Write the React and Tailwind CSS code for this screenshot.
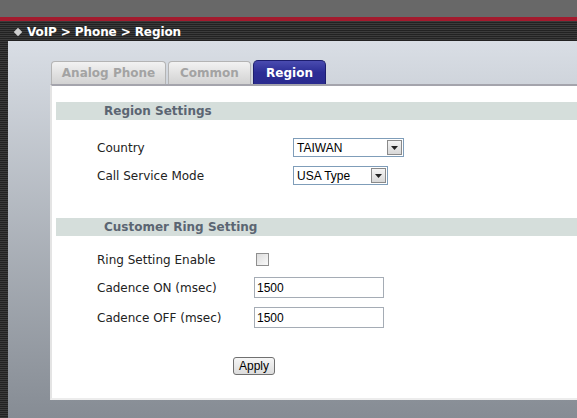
const stripes =
  'bg-[repeating-linear-gradient(180deg,#3b3b3b_0px,#3b3b3b_1px,#222222_1px,#222222_2px)]';

const SectionBar = ({ title }) => (
  <div className="ml-[4px] flex h-[18px] items-center bg-[#d5dedb] pl-[48px] text-[12px] font-bold text-[#5b6572]">
    {title}
  </div>
);

const Select = ({ value, width }) => (
  <div
    className="flex h-[19px] items-center justify-between border border-[#7f9db9] bg-white pl-[3px] pr-[1px]"
    style={{ width }}
  >
    <span className="font-['Liberation_Sans',Arial,sans-serif] text-[12px] text-black">{value}</span>
    <span className="flex h-[15px] w-[15px] items-center justify-center border border-[#8a8a8a] bg-gradient-to-b from-[#f4f4f4] to-[#d8d8d8]">
      <svg width="7" height="4" viewBox="0 0 7 4">
        <path d="M0 0h7L3.5 4z" fill="#222" />
      </svg>
    </span>
  </div>
);

const TextInput = ({ value }) => (
  <div className="flex h-[21px] w-[130px] items-center border border-[#a5acb5] bg-white pl-[2px] font-['Liberation_Sans',Arial,sans-serif] text-[12px] text-black">
    {value}
  </div>
);

export default function App() {
  return (
    <div className="flex h-[418px] w-[577px] flex-col overflow-hidden font-['DejaVu_Sans',Verdana,sans-serif]">
      <div className="h-[17px] bg-[#686868]" />
      <div className="h-[4px] bg-[#a31b2e]" />
      <div className={`flex h-[20px] items-center gap-[6px] pl-[14px] pt-[2px] ${stripes}`}>
        <span className="ml-[1px] h-[6px] w-[6px] rotate-45 bg-[#cfcfcf]" />
        <span className="text-[12px] font-bold tracking-[-0.1px] text-white">VoIP &gt; Phone &gt; Region</span>
      </div>
      <div className="flex flex-1">
        <div className={`w-[8px] ${stripes}`} />
        <div className="flex flex-1 flex-col bg-gradient-to-b from-[#d9dee5] to-[#868c94] pl-[42px] pt-[19px]">
          <div className="flex items-end gap-[2px] pl-[1px] text-[12px] font-bold">
            <div className="flex h-[23px] w-[115px] items-center justify-center rounded-t-[4px] border border-b-0 border-[#b4b4b4] bg-gradient-to-b from-[#f2f2f2] to-[#d2d2d2] text-[#a3a3a3]">
              Analog Phone
            </div>
            <div className="flex h-[23px] w-[83px] items-center justify-center rounded-t-[4px] border border-b-0 border-[#b4b4b4] bg-gradient-to-b from-[#f2f2f2] to-[#d2d2d2] text-[#a3a3a3]">
              Common
            </div>
            <div className="flex h-[24px] w-[73px] items-center justify-center rounded-t-[5px] border border-b-0 border-[#1d1e6e] bg-gradient-to-b from-[#4a4bb0] via-[#2c2d95] to-[#2a2b8f] text-white">
              Region
            </div>
          </div>
          <div className="flex h-[316px] flex-col border-l-2 border-t-2 border-b-2 border-l-[#e4e4e4] border-t-[#a4a4ac] border-b-[#ececec] bg-white text-[12px] text-[#222]">
            <div className="mt-[16px]">
              <SectionBar title="Region Settings" />
            </div>
            <div className="mt-[18px] flex flex-col gap-[9px] pl-[45px]">
              <div className="flex items-center">
                <span className="w-[196px]">Country</span>
                <Select value="TAIWAN" width={111} />
              </div>
              <div className="flex items-center">
                <span className="w-[196px]">Call Service Mode</span>
                <Select value="USA Type" width={95} />
              </div>
            </div>
            <div className="mt-[33px]">
              <SectionBar title="Customer Ring Setting" />
            </div>
            <div className="flex flex-col pl-[45px]">
              <div className="mt-[13px] flex h-[21px] items-center">
                <span className="w-[159px]">Ring Setting Enable</span>
                <span className="h-[13px] w-[13px] border border-[#8f8f8f] bg-gradient-to-br from-[#dcdcdc] to-[#fafafa]" />
              </div>
              <div className="mt-[7px] flex items-center">
                <span className="w-[157px]">Cadence ON (msec)</span>
                <TextInput value="1500" />
              </div>
              <div className="mt-[9px] flex items-center">
                <span className="w-[157px]">Cadence OFF (msec)</span>
                <TextInput value="1500" />
              </div>
            </div>
            <div className="mt-[29px] pl-[181px]">
              <button className="flex h-[18px] w-[42px] items-center justify-center rounded-[3px] border border-[#707070] bg-gradient-to-b from-[#f6f6f6] to-[#dcdcdc] font-['Liberation_Sans',Arial,sans-serif] text-[12px] text-black">
                Apply
              </button>
            </div>
          </div>
        </div>
      </div>
    </div>
  );
}
